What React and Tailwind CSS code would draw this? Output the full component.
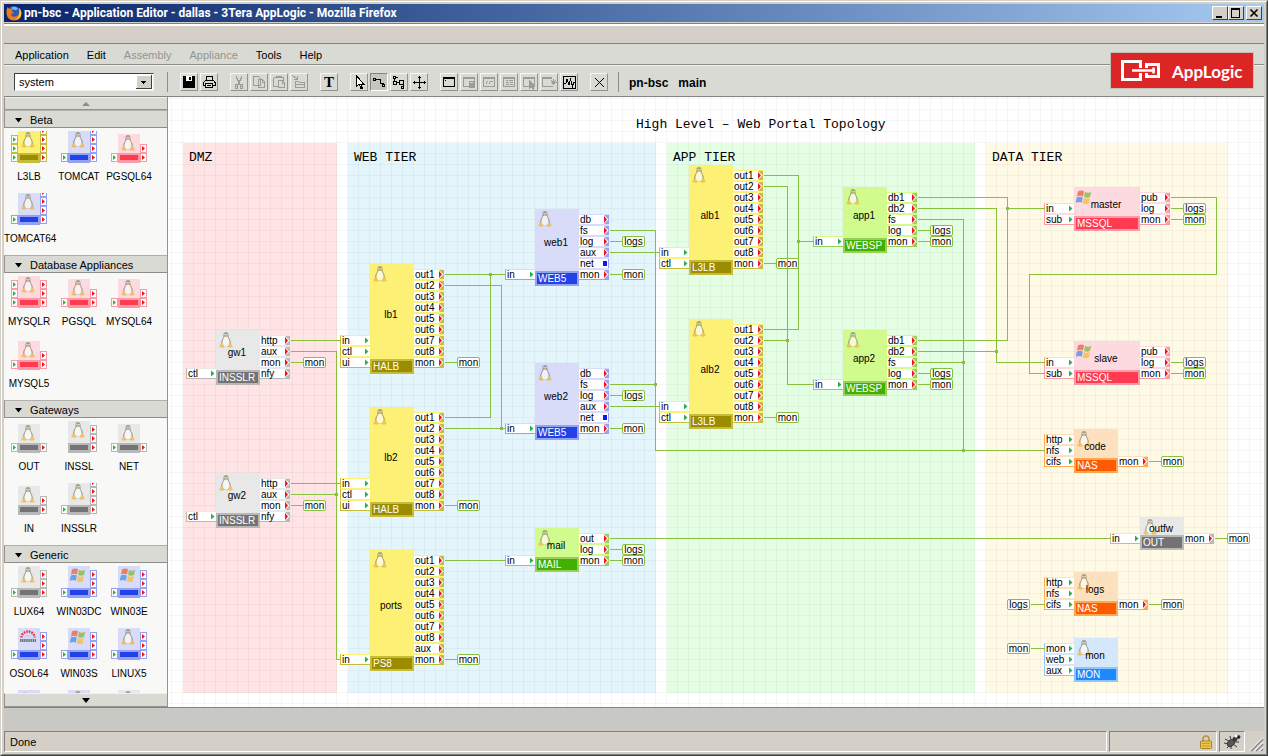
import React from "react";

/* Colour themes shared by the palette and the diagram */
const THEMES = {
  yellow: { body: "#fcf075", edge: "#c6bc3c", label: "#9c8c00" },
  gray: { body: "#e8e8e8", edge: "#b8b8b8", label: "#737373" },
  violet: { body: "#d8dcf8", edge: "#94a2f2", label: "#2242e8" },
  green: { body: "#d2fb8e", edge: "#98cf58", label: "#42b000" },
  pink: { body: "#fcdadf", edge: "#fb9aa6", label: "#fe3b50" },
  orange: { body: "#fde0bd", edge: "#fda850", label: "#fe5a02" },
  blue: { body: "#d4e7fb", edge: "#90c4fc", label: "#2088fe" },
};

/* Diagram coordinates of the canvas corner */
const ORIGIN_X = 168;
const ORIGIN_Y = 97;
const ROW = 11;
const PORT_W = 30;
const at = (x, y) => ({ left: x - ORIGIN_X, top: y - ORIGIN_Y });

const outs8 = ["out1", "out2", "out3", "out4", "out5", "out6", "out7", "out8"];
const rows = (names, from = 0) => names.map((name, i) => ({ name, row: from + i }));

const ZONES = [
  { name: "DMZ", x: 183, w: 154, color: "#fee4e4" },
  { name: "WEB TIER", x: 348, w: 308, color: "#e4f5fc" },
  { name: "APP TIER", x: 667, w: 308, color: "#e4fee4" },
  { name: "DATA TIER", x: 986, w: 242, color: "#fefae6" },
];

const gwOuts = rows(["http", "aux", "mon", "nfy"]);
const lbOuts = rows([...outs8, "mon"]);
const webOuts = rows(["db", "fs", "log", "aux", "net", "mon"]);
const appOuts = rows(["db1", "db2", "fs", "log", "mon"]);
const dbOuts = rows(["pub", "log", "mon"]);

/* y is the centre line of the first port row */
const NODES = [
  { name: "gw1", type: "INSSLR", theme: "gray", x: 216, y: 340, n: 4, ins: rows(["ctl"], 3), outs: gwOuts },
  { name: "gw2", type: "INSSLR", theme: "gray", x: 216, y: 483, n: 4, ins: rows(["ctl"], 3), outs: gwOuts },
  { name: "lb1", type: "HALB", theme: "yellow", x: 370, y: 274, n: 9, ins: rows(["in", "ctl", "ui"], 6), outs: lbOuts },
  { name: "lb2", type: "HALB", theme: "yellow", x: 370, y: 417, n: 9, ins: rows(["in", "ctl", "ui"], 6), outs: lbOuts },
  { name: "ports", type: "PS8", theme: "yellow", x: 370, y: 560, n: 10, ins: rows(["in"], 9), outs: rows([...outs8, "aux", "mon"]) },
  { name: "web1", type: "WEB5", theme: "violet", x: 535, y: 219, n: 6, ins: rows(["in"], 5), outs: webOuts },
  { name: "web2", type: "WEB5", theme: "violet", x: 535, y: 373, n: 6, ins: rows(["in"], 5), outs: webOuts },
  { name: "mail", type: "MAIL", theme: "green", x: 535, y: 538, n: 3, ins: rows(["in"], 2), outs: rows(["out", "log", "mon"]) },
  { name: "alb1", type: "L3LB", theme: "yellow", x: 689, y: 175, n: 9, ins: rows(["in", "ctl"], 7), outs: lbOuts },
  { name: "alb2", type: "L3LB", theme: "yellow", x: 689, y: 329, n: 9, ins: rows(["in", "ctl"], 7), outs: lbOuts },
  { name: "app1", type: "WEBSP", theme: "green", x: 843, y: 197, n: 5, ins: rows(["in"], 4), outs: appOuts },
  { name: "app2", type: "WEBSP", theme: "green", x: 843, y: 340, n: 5, ins: rows(["in"], 4), outs: appOuts },
  { name: "master", type: "MSSQL", theme: "pink", os: "win", x: 1074, w: 66, y: 197, n: 3, ins: rows(["in", "sub"], 1), outs: dbOuts },
  { name: "slave", type: "MSSQL", theme: "pink", os: "win", x: 1074, w: 66, y: 351, n: 3, ins: rows(["in", "sub"], 1), outs: dbOuts },
  { name: "code", type: "NAS", theme: "orange", x: 1074, y: 439, n: 3, ins: rows(["http", "nfs", "cifs"]), outs: rows(["mon"], 2) },
  { name: "outfw", type: "OUT", theme: "gray", x: 1140, y: 527, n: 2, ins: rows(["in"], 1), outs: rows(["mon"], 1) },
  { name: "logs", type: "NAS", theme: "orange", x: 1074, y: 582, n: 3, ins: rows(["http", "nfs", "cifs"]), outs: rows(["mon"], 2) },
  { name: "mon", type: "MON", theme: "blue", x: 1074, y: 648, n: 3, ins: rows(["mon", "web", "aux"]), outs: [] },
];

const TAGS = [
  ["mon", 303, 362], ["mon", 303, 505],
  ["mon", 457, 362], ["mon", 457, 505], ["mon", 457, 659],
  ["logs", 622, 241], ["mon", 622, 274],
  ["logs", 622, 395], ["mon", 622, 428],
  ["logs", 622, 549], ["mon", 622, 560],
  ["mon", 776, 263], ["mon", 776, 417],
  ["logs", 930, 230], ["mon", 930, 241],
  ["logs", 930, 373], ["mon", 930, 384],
  ["logs", 1183, 208], ["mon", 1183, 219],
  ["logs", 1183, 362], ["mon", 1183, 373],
  ["mon", 1161, 461], ["mon", 1161, 604],
  ["mon", 1227, 538],
  ["logs", 1007, 604], ["mon", 1007, 648],
];

const WIRES = [
  "M290 340H340", "M290 351H336V659H340", "M290 362H303",
  "M290 483H340", "M290 494H336", "M290 505H303",
  "M444 274H505", "M444 285H501V428", "M444 362H457",
  "M444 417H490V274", "M444 428H505", "M444 505H457",
  "M444 560H505", "M444 659H457",
  "M609 230H655V450H1044", "M609 241H622", "M609 252H659", "M609 274H622",
  "M609 384H655", "M609 395H622", "M609 406H659", "M609 428H622",
  "M609 538H1110", "M609 549H622", "M609 560H622",
  "M763 175H798V329H763", "M798 241H813", "M763 186H787V384H813", "M763 263H776",
  "M763 340H787", "M763 417H776",
  "M917 197H1007V340H917", "M1007 208H1044", "M917 208H996V362H1044",
  "M917 219H963V450", "M917 230H930", "M917 241H930",
  "M917 351H996", "M917 362H963", "M917 373H930", "M917 384H930",
  "M1170 197H1216V274H1029V373H1044", "M1170 208H1183", "M1170 219H1183",
  "M1170 362H1183", "M1170 373H1183",
  "M1148 461H1161", "M1214 538H1227", "M1148 604H1161", "M1030 604H1044", "M1030 648H1044",
];

const JOINTS = [
  [336, 494], [490, 274], [501, 428], [655, 384], [798, 241], [787, 340],
  [1007, 208], [996, 351], [963, 362], [963, 450],
];

const SECTIONS = [
  {
    title: "Beta",
    items: [
      { name: "L3LB", theme: "yellow", ins: 3, outs: 4 },
      { name: "TOMCAT", theme: "violet", ins: 1, outs: 4 },
      { name: "PGSQL64", theme: "pink", ins: 1, outs: 2 },
      { name: "TOMCAT64", theme: "violet", ins: 1, outs: 4 },
    ],
  },
  {
    title: "Database Appliances",
    items: [
      { name: "MYSQLR", theme: "pink", ins: 3, outs: 3 },
      { name: "PGSQL", theme: "pink", ins: 1, outs: 2 },
      { name: "MYSQL64", theme: "pink", ins: 1, outs: 2 },
      { name: "MYSQL5", theme: "pink", ins: 1, outs: 2 },
    ],
  },
  {
    title: "Gateways",
    items: [
      { name: "OUT", theme: "gray", ins: 1, outs: 1 },
      { name: "INSSL", theme: "gray", ins: 0, outs: 3 },
      { name: "NET", theme: "gray", ins: 1, outs: 1 },
      { name: "IN", theme: "gray", ins: 0, outs: 2 },
      { name: "INSSLR", theme: "gray", ins: 1, outs: 4 },
    ],
  },
  {
    title: "Generic",
    items: [
      { name: "LUX64", theme: "gray", ins: 1, outs: 3 },
      { name: "WIN03DC", theme: "violet", os: "win", ins: 1, outs: 3 },
      { name: "WIN03E", theme: "violet", os: "win", ins: 1, outs: 3 },
      { name: "OSOL64", theme: "violet", os: "sun", ins: 1, outs: 3 },
      { name: "WIN03S", theme: "violet", os: "win", ins: 1, outs: 3 },
      { name: "LINUX5", theme: "violet", ins: 1, outs: 3 },
      { theme: "violet", os: "win", ins: 1, outs: 3 },
      { theme: "violet", ins: 1, outs: 3 },
      { theme: "gray", ins: 1, outs: 3 },
    ],
  },
];

/* Operating system marks, drawn in a 16 by 16 box */
function OsMark({ os }) {
  if (os === "win") {
    return (
      <g opacity="0.75">
        <path d="M2 2.5Q5 .5 8 2.2L7 7.5Q4 6 1 7.5z" fill="#e4643c" />
        <path d="M9 2.8Q12 4.5 15.2 2.8L14 8Q11 9.6 8 8z" fill="#84b83c" />
        <path d="M.8 8.6Q4 7 6.8 8.6L5.8 13.8Q3 12-.2 13.8z" fill="#4c8ce0" />
        <path d="M7.8 9Q11 10.6 13.8 9L12.8 14.4Q10 16 6.8 14.4z" fill="#f4c034" />
      </g>
    );
  }
  if (os === "sun") {
    return (
      <g>
        <path d="M1.5 8.500A6.500 6 0 0 1 14.500 8.500" fill="none" stroke="#e83038" strokeWidth="2.400" strokeDasharray="1.600 1" />
        <path d="M5 8.500A3.200 3 0 0 1 11 8.500" fill="none" stroke="#f4a0a0" strokeWidth="1" strokeDasharray="1 1" />
        <path d="M0 11.500h16" stroke="#5c7070" strokeWidth="3" strokeDasharray="1.400 .7" />
      </g>
    );
  }
  return (
    <g opacity="0.7">
      <path d="M8 0C6 0 5.300 1.300 5.400 3.200c.1 1.600-.2 2.400-1 3.800C3.300 8.800 2.900 10.500 3 12.500l2 2h6l2-2c.1-2-.3-3.700-1.400-5.500-.8-1.400-1.100-2.200-1-3.800C10.700 1.300 10 0 8 0z" fill="#84847c" />
      <path d="M8 4.600c-1.700 0-2 1.200-2.800 3C4.500 9.200 4.300 10.400 4.500 12c.3 1.700 1.700 2.500 3.500 2.500s3.200-.8 3.500-2.500c.2-1.600 0-2.800-.7-4.400-.8-1.800-1.100-3-2.800-3z" fill="#fcfcfa" />
      <circle cx="7" cy="2.600" r=".7" fill="#fff" />
      <circle cx="9.200" cy="2.600" r=".7" fill="#fff" />
      <path d="M6.400 4L8 3.200 9.700 4 8 5.200z" fill="#e8b030" />
      <path d="M3 11.200l1.400.2 1.800 2.600-.6 1.600-1.300.2L1.400 15l.2-1.200z" fill="#f0b438" />
      <path d="M13 11.200l-1.400.2-1.800 2.600.6 1.600 1.300.2 2.900-.8-.2-1.200z" fill="#f0b438" />
    </g>
  );
}

function PaletteIcon({ theme, os, ins, outs }) {
  const t = THEMES[theme];
  const n = Math.max(ins, outs);
  const top = n >= 3 ? 0 : 3;
  const port = (x, i, color) => {
    const y = 22 - i * 9;
    return (
      <g key={x + "-" + i}>
        <rect x={x + 0.5} y={y + 0.5} width="6" height="8" fill="#fff" stroke={t.edge} />
        <path d={`M${x + 2} ${y + 2}v5l3-2.500z`} fill={color} />
      </g>
    );
  };
  return (
    <svg width="36" height="32" viewBox="0 0 36 32" className="block overflow-hidden" aria-hidden="true">
      <rect x="7" y={top} width="22" height={32 - top} fill={t.body} />
      {Array.from({ length: ins }, (_, i) => port(0, i, "#30b040"))}
      {Array.from({ length: outs }, (_, i) => port(29, i, "#f01414"))}
      <g transform={`translate(9 ${top + 1})`}><OsMark os={os} /></g>
      <rect x="7" y="22" width="22" height="10" fill={t.edge} />
      <rect x="9" y="24" width="18" height="5" fill={t.label} />
    </svg>
  );
}

function PortMark({ kind, edge }) {
  if (kind === "in") {
    return (
      <svg width="4" height="9" viewBox="0 0 4 9" className="mr-px block" aria-hidden="true">
        <path d="M0 1.500v6l3.500-3z" fill="#2cb04c" />
      </svg>
    );
  }
  return (
    <svg width="5" height="9" viewBox="0 0 5 9" className="block overflow-visible" aria-hidden="true">
      <rect width="5" height="9" fill={edge} />
      {kind === "net" ? (
        <>
          <rect x="-1" width="5" height="9" fill="#fff" />
          <rect x="-1" y="2" width="4" height="5" fill="#1418f0" />
        </>
      ) : (
        <>
          <path d="M0 0v9l4.500-4.500z" fill="#fff" />
          <path d="M0 1v7l3-3.500z" fill="#f01420" />
        </>
      )}
    </svg>
  );
}

function Port({ side, node, port, last }) {
  const t = THEMES[node.theme];
  const w = node.w || 44;
  const x = side === "in" ? node.x - PORT_W : node.x + w;
  const kind = side === "in" ? "in" : port.name === "net" ? "net" : "out";
  return (
    <div
      className={
        "absolute flex h-[11px] items-center justify-between border-y bg-white text-[10px] leading-[9px] " +
        (side === "in" ? "border-l pl-px" : "pl-px")
      }
      style={{
        ...at(x, node.y + port.row * ROW - 5),
        width: PORT_W,
        borderColor: t.body,
        borderLeftColor: t.edge,
        borderBottomColor: last ? t.edge : t.body,
      }}
    >
      <span>{port.name}</span>
      <PortMark kind={kind} edge={t.edge} />
    </div>
  );
}

function Node({ node }) {
  const t = THEMES[node.theme];
  return (
    <>
      <div
        className="absolute flex flex-col"
        style={{ ...at(node.x, node.y - 10), width: node.w || 44, height: (node.n + 1) * ROW, background: t.body }}
      >
        <svg width="16" height="16" viewBox="0 0 16 16" className="absolute left-0.5 top-0.5" aria-hidden="true">
          <OsMark os={node.os} />
        </svg>
        <div className="relative flex min-h-0 flex-1 items-center justify-center pt-1.5 pr-0.5 text-[10px] leading-3">{node.name}</div>
        <div
          className="flex h-[15px] items-center border-2 pl-px text-[10px] leading-[11px] text-white"
          style={{ background: t.label, borderColor: t.edge }}
        >
          {node.type}
        </div>
      </div>
      {node.ins.map((p, i) => (
        <Port key={"i" + p.row} side="in" node={node} port={p} last={i === node.ins.length - 1} />
      ))}
      {node.outs.map((p, i) => (
        <Port key={"o" + p.row} side="out" node={node} port={p} last={i === node.outs.length - 1} />
      ))}
    </>
  );
}

function Canvas() {
  return (
    <main className="relative min-w-0 flex-1 overflow-hidden bg-white">
      {ZONES.map((z) => (
        <div key={z.name} className="absolute h-[550px]" style={{ ...at(z.x, 143), width: z.w, background: z.color }} />
      ))}
      <div className="absolute inset-0 bg-[linear-gradient(to_right,rgba(0,0,0,0.035)_1px,transparent_1px),linear-gradient(to_bottom,rgba(0,0,0,0.035)_1px,transparent_1px)] bg-[size:11px_11px] bg-[position:3px_1px]" />
      <h1 className="absolute font-['Liberation_Mono',monospace] text-[13px] leading-4 whitespace-nowrap" style={at(636, 117)}>
        High Level – Web Portal Topology
      </h1>
      {ZONES.map((z) => (
        <h2
          key={z.name}
          className="absolute font-['Liberation_Mono',monospace] text-[13px] leading-4 whitespace-nowrap"
          style={at(z.x + 6, 150)}
        >
          {z.name}
        </h2>
      ))}
      {NODES.map((n) => (
        <Node key={n.name} node={n} />
      ))}
      {TAGS.map(([name, x, y]) => (
        <div
          key={x + "-" + y}
          className="absolute h-[11px] w-[23px] rounded-xs border border-[#86c03c] bg-white text-center text-[10px] leading-[9px]"
          style={at(x, y - 5)}
        >
          {name}
        </div>
      ))}
      <svg className="pointer-events-none absolute inset-0 h-full w-full" shapeRendering="crispEdges" aria-hidden="true">
        <g transform={`translate(${0.5 - ORIGIN_X} ${0.5 - ORIGIN_Y})`}>
          {WIRES.map((d) => (
            <path key={d} d={d} fill="none" stroke="#86c03c" />
          ))}
          {JOINTS.map(([x, y]) => (
            <rect key={x + "-" + y} x={x - 1.5} y={y - 1.5} width="3" height="3" fill="#86c03c" />
          ))}
        </g>
      </svg>
    </main>
  );
}

/* Toolbar glyphs, drawn in a 16 by 16 box */
const win = "M2.500 3.500h11v9h-11zM3 4.500h10";
const GLYPHS = {
  Save: (
    <>
      <path d="M2 2h11l1 1v11H2z" fill="currentColor" stroke="none" />
      <path d="M5 2h6v5H5z" fill="#fff" stroke="none" />
      <path d="M8 3h2v3H8z" fill="currentColor" stroke="none" />
    </>
  ),
  Print: <path d="M5.500 6.500v-4h6v4M4.500 6.500h8l1.500 2v3h-2.500M4.500 6.500l-2 2v3h2.500M4.500 9.500h7v4h-7zM6 11.500h4" />,
  Cut: <path d="M5.500 1.500v2l2.500 5 2.500 5M10.500 1.500v2L8 8.500l-2.500 5M4.500 10.500h2v4h-2zM9.500 10.500h2v4h-2z" />,
  Copy: <path d="M2.500 2.500h5l2 2v7h-7zM7.500 5.500h4l2 2v6h-6zM11 6v2h2" />,
  Paste: <path d="M2.500 3.500h10v3M2.500 3.500v9h4M5 3.500v-1h5v1M7.500 6.500h4l2 2v5h-6zM11 7v2h2" />,
  Import: <path d="M1 1l5 4M6 2v3H3M4.500 7.500h3l1 1h5v5h-9zM4.500 10.500h9" />,
  Select: <path d="M5.500 1.500v11l2.500-2.500 2 4.500h1.500l-2-4.500h3z" fill="#fff" />,
  Connect: <path d="M2.500 4.500h2v2h-2zM11.500 10.500h2v2h-2zM5 5.500h4v3l1 1h2.500v1" />,
  Ports: <path d="M2.500 2.500h2v2h-2zM2.500 7.500h3v3h-3zM3.500 5v2M5 3.500h2M8.500 6.500h4v4h-4zM10.500 12.500h2v2h-2zM12.500 10.500v2M6 8.500h2" />,
  Move: <path d="M8.500 2v13M2 8.500h13M7 3.500h3M7 13.500h3M3.500 7v3M13.500 7v3" />,
  Window: (
    <>
      <path d={win} />
      <path d="M2 3h12v2H2zM4 6h1v1H4z" fill="currentColor" stroke="none" />
    </>
  ),
  Lock: (
    <>
      <path d={win} />
      <path d="M8.500 9V7.500h4V9" />
      <path d="M8 9h6v5H8z" fill="currentColor" stroke="none" />
    </>
  ),
  Chart: <path d={win + "M5 9.500l1.500-2M8 9.500l1.500-2M10.500 8l1-1"} />,
  Grid: <path d={win + "M4.500 6.500h2M8 6.500h4M4.500 8.500h3M9 8.500h3M4.500 10.500h3M9 10.500h3"} />,
  Pick: (
    <>
      <path d={win} />
      <path d="M8 6v9l2-2 2 3 1.500-1-1.500-3h3z" fill="currentColor" stroke="none" />
    </>
  ),
  New: <path d="M11 3.500H1.500v9h10V12M1.500 4.500h9M12.500 5v6M10 8.500h5.500M10.500 6.500l4 4M14.500 6.500l-4 4" />,
  Monitor: <path d="M2.500 2.500h12v12h-12zM3 9.500h2l1-4 2 5 1.500-5 2 7 1-4h2" />,
  Delete: <path d="M4 4l9 9M13 4l-9 9" shapeRendering="auto" />,
};

const TOOL_GROUPS = [
  [["Save"], ["Print"]],
  [["Cut", "off"], ["Copy", "off"], ["Paste", "off"], ["Import", "off"]],
  [["Text"]],
  [["Select"], ["Connect", "on"], ["Ports"], ["Move"]],
  [["Window"], ["Lock", "off"], ["Chart", "off"], ["Grid", "off"], ["Pick", "off"], ["New", "off"], ["Monitor"]],
  [["Delete"]],
];

function ToolButton({ name, state }) {
  const tone = state === "off" ? "text-[#9c9c96]" : "text-black";
  const edge =
    state === "on"
      ? "border-t-[#84847f] border-l-[#84847f] border-r-white border-b-white bg-[#c6c6c1]"
      : "border-t-[#f6f6f4] border-l-[#f6f6f4] border-r-[#94948f] border-b-[#94948f]";
  return (
    <button
      type="button"
      aria-label={name}
      disabled={state === "off"}
      aria-pressed={state === "on"}
      className={"flex h-[18px] w-[18px] items-center justify-center border " + tone + " " + edge}
    >
      {name === "Text" ? (
        <span className="font-['Liberation_Serif',serif] text-[15px] leading-4 font-bold">T</span>
      ) : (
        <svg width="16" height="16" viewBox="0 0 16 16" fill="none" stroke="currentColor" shapeRendering="crispEdges" aria-hidden="true">
          {GLYPHS[name]}
        </svg>
      )}
    </button>
  );
}

function TitleBar() {
  const btn =
    "flex h-3.5 w-4 items-center justify-center border border-t-white border-l-white border-r-[#404040] border-b-[#404040] bg-[#d4d0c8]";
  return (
    <header className="flex h-[18px] shrink-0 items-center bg-linear-to-r from-[#0a246a] to-[#a6caf0] pr-0.5 pl-0.5">
      <svg width="16" height="16" viewBox="0 0 16 16" aria-hidden="true">
        <circle cx="8" cy="8" r="7" fill="#2c5cb8" />
        <path d="M5 3q4-2.500 7 .5-1 2-3.500 1.500z" fill="#7cb4ec" />
        <path d="M1.500 2Q0 5 .5 9q1 6 7.500 6.500Q15 15.500 15.500 8.500q0-4-2.500-6 1 3 .2 5-.7 4-4.700 4.200Q5 11.500 5 8.500q1.500.8 3-.5L6 6.500q0-1.500 1-2.500Q4.500 3.500 3.500 4z" fill="#ee7a18" />
        <path d="M15.400 8q-.4 6-6.900 7 4-2 4.700-5.500.5-3-.2-6.500 2 2 2.400 5z" fill="#fccc3c" />
      </svg>
      <span className="ml-0.5 flex-1 truncate font-['Roboto',sans-serif] text-[12px] leading-4 font-bold text-white">
        pn-bsc - Application Editor - dallas - 3Tera AppLogic - Mozilla Firefox
      </span>
      <button type="button" aria-label="Minimize" className={btn}>
        <svg width="12" height="10" viewBox="0 0 12 10"><path d="M2 8h6v2H2z" /></svg>
      </button>
      <button type="button" aria-label="Maximize" className={btn}>
        <svg width="12" height="10" viewBox="0 0 12 10" shapeRendering="crispEdges"><path d="M1.500 1v8.500h8V1" fill="none" stroke="#000" /><path d="M1 0h9v2H1z" /></svg>
      </button>
      <button type="button" aria-label="Close" className={btn + " ml-0.5"}>
        <svg width="12" height="10" viewBox="0 0 12 10"><path d="M2.500 1.500l7 7M9.500 1.500l-7 7" stroke="#000" strokeWidth="1.600" /></svg>
      </button>
    </header>
  );
}

function Logo() {
  return (
    <div className="absolute top-[9px] right-[11px] flex h-[35px] w-[142px] items-center bg-[#dc2626] pl-2.5 outline outline-[#c4c0bc]">
      <svg width="39" height="21" viewBox="0 0 39 21" fill="none" stroke="#fff" aria-hidden="true">
        <path d="M19.500 8V1.500h-18v18h18V13" strokeWidth="3" />
        <path d="M25.500 8V4.500h12v12h-12V13" strokeWidth="3" />
        <path d="M11 10.500h23" strokeWidth="2.500" />
        <path d="M32.500 7.500v6" strokeWidth="2.500" />
      </svg>
      <span className="ml-3 pt-0.5 font-['Lato',sans-serif] text-[17px] leading-5 font-bold text-white">AppLogic</span>
    </div>
  );
}

const MENUS = [
  ["Application", true],
  ["Edit", true],
  ["Assembly", false],
  ["Appliance", false],
  ["Tools", true],
  ["Help", true],
];

function Bars() {
  return (
    <div className="relative shrink-0 bg-[#dadad5]">
      <nav className="flex h-[21px] items-center gap-[18px] border-b border-[#8c8c88] pt-0.5 pl-[11px] text-[11px]">
        {MENUS.map(([name, on]) => (
          <button key={name} type="button" disabled={!on} className={on ? "text-black" : "text-[#94948f]"}>
            {name}
          </button>
        ))}
      </nav>
      <div className="flex h-8 items-center border-t border-b border-t-[#f0f0ee] border-b-[#84847f] pt-0.5 pl-2.5">
        <label className="relative block h-[18px] w-[140px]">
          <span className="sr-only">Catalog</span>
          <select
            defaultValue="system"
            className="block h-[18px] w-full appearance-none border border-t-[#404040] border-l-[#404040] border-r-[#f0f0ee] border-b-[#f0f0ee] bg-white pl-1 text-[11px] leading-[14px]"
          >
            <option>system</option>
          </select>
          <svg width="16" height="14" viewBox="0 0 16 14" className="pointer-events-none absolute top-0.5 right-0.5" shapeRendering="crispEdges" aria-hidden="true">
            <rect width="16" height="14" fill="#404040" />
            <rect width="15" height="13" fill="#fff" />
            <rect x="1" y="1" width="14" height="12" fill="#d4d0c8" />
            <path d="M5 6h5v1h-1v1h-1v1h-1v-1h-1v-1h-1z" />
          </svg>
        </label>
        <div className="ml-[13px] h-5 w-px bg-[#8c8c88]" />
        <div className="ml-3 flex gap-3">
          {TOOL_GROUPS.map((group, i) => (
            <div key={i} className="flex gap-0.5">
              {group.map(([name, state]) => (
                <ToolButton key={name} name={name} state={state} />
              ))}
            </div>
          ))}
        </div>
        <div className="ml-2.5 h-5 w-px bg-[#8c8c88]" />
        <div className="ml-2.5 flex gap-2.5 pt-0.5 text-[12px] leading-4 font-bold">
          <span>pn-bsc</span>
          <span>main</span>
        </div>
      </div>
      <Logo />
    </div>
  );
}

function Sidebar() {
  const scroll =
    "flex w-full shrink-0 items-center justify-center border-b border-l border-t border-t-[#f0f0ee] border-l-[#94948f] border-b-[#94948f] bg-[#dadad5]";
  return (
    <aside className="flex w-[164px] shrink-0 flex-col border-r border-[#94948f] bg-[#f8f8f6]">
      <button type="button" aria-label="Scroll up" className={scroll + " h-[13px]"}>
        <svg width="8" height="4" viewBox="0 0 8 4"><path d="M4 0l4 4H0z" fill="#8c8c88" /></svg>
      </button>
      <div className="min-h-0 flex-1 overflow-hidden">
        {SECTIONS.map((s) => (
          <section key={s.title}>
            <button
              type="button"
              className="flex h-[18px] w-full items-center gap-2 border-t border-b border-l border-t-[#b0b0ab] border-l-[#94948f] border-b-[#8c8c88] bg-[#dadad5] pt-0.5 pl-2.5 text-[11px] leading-4"
            >
              <svg width="7" height="5" viewBox="0 0 7 5" aria-hidden="true"><path d="M0 0h7L3.500 4.500z" /></svg>
              {s.title}
            </button>
            <ul className="grid grid-cols-[50px_50px_50px] pt-[3px]">
              {s.items.map((it, i) => (
                <li key={i} className="flex h-[62px] flex-col items-center">
                  <PaletteIcon {...it} />
                  {it.name && (
                    <span className="mt-[7px] block w-full text-center text-[10px] leading-3.5 whitespace-nowrap">{it.name}</span>
                  )}
                </li>
              ))}
            </ul>
          </section>
        ))}
      </div>
      <button type="button" aria-label="Scroll down" className={scroll + " h-3.5 border-t-[#94948f]"}>
        <svg width="8" height="5" viewBox="0 0 8 5"><path d="M0 0h8L4 5z" /></svg>
      </button>
    </aside>
  );
}

function StatusBar() {
  const cell = "flex h-[21px] items-center border border-t-[#808080] border-l-[#808080] border-r-white border-b-white";
  return (
    <footer className="flex shrink-0 gap-0.5">
      <div className={cell + " min-w-0 flex-1 pt-0.5 pl-[5px] text-[11px]"}>Done</div>
      <div className={cell + " w-[108px] justify-end pr-1"}>
        <svg width="12" height="14" viewBox="0 0 12 14" aria-label="Secure">
          <path d="M3 7V4a3 3 0 0 1 6 0v3" fill="none" stroke="#b8943c" strokeWidth="1.600" />
          <rect x="0.500" y="6" width="11" height="7.500" rx="1" fill="#ecc44c" stroke="#a88424" />
          <path d="M2 8.500h8M2 11h8" stroke="#c89c2c" />
        </svg>
      </div>
      <div className={cell + " w-[26px] justify-center"}>
        <svg width="18" height="16" viewBox="0 0 18 16" fill="none" stroke="#383838" aria-label="Debugger">
          <path d="M2 5l4 2M1 9l5 1M4 14l3-3M8 15v-4M14 13l-4-3M7 2l1 4M16 8l-5 0" />
          <ellipse cx="8" cy="9" rx="4" ry="2.800" transform="rotate(-40 8 9)" fill="#585858" />
          <circle cx="12" cy="5" r="2" fill="#383838" />
          <circle cx="15.500" cy="3" r="1.500" fill="#101010" />
          <circle cx="13" cy="2" r="1.500" fill="#fff" stroke="none" />
        </svg>
      </div>
      <svg width="17" height="21" viewBox="0 0 17 21" fill="none" aria-hidden="true">
        <path d="M4 20L16 8M9 20l7-7M14 20l2-2" stroke="#808080" strokeWidth="1.500" />
        <path d="M2.500 20L16 6.500M7.500 20L16 11.500M12.500 20l3.500-3.500" stroke="#fff" />
      </svg>
    </footer>
  );
}

export default function App() {
  return (
    <div className="h-screen border border-t-[#d4d0c8] border-r-[#404040] border-b-[#404040] border-l-[#d4d0c8] bg-[#d4d0c8] font-['Liberation_Sans',Arial,sans-serif] text-black">
      <div className="flex h-full flex-col border border-t-white border-r-[#808080] border-b-[#808080] border-l-white p-0.5">
        <TitleBar />
        <div className="h-0.5 shrink-0 border-b border-[#808080]" />
        <div className="h-5 shrink-0 border-t-2 border-b border-t-white border-b-[#808080]" />
        <Bars />
        <div className="flex min-h-0 flex-1">
          <Sidebar />
          <Canvas />
        </div>
        <div className="h-6 shrink-0 border-t border-[#84847f] bg-[#c8c8c4]" />
        <StatusBar />
      </div>
    </div>
  );
}
